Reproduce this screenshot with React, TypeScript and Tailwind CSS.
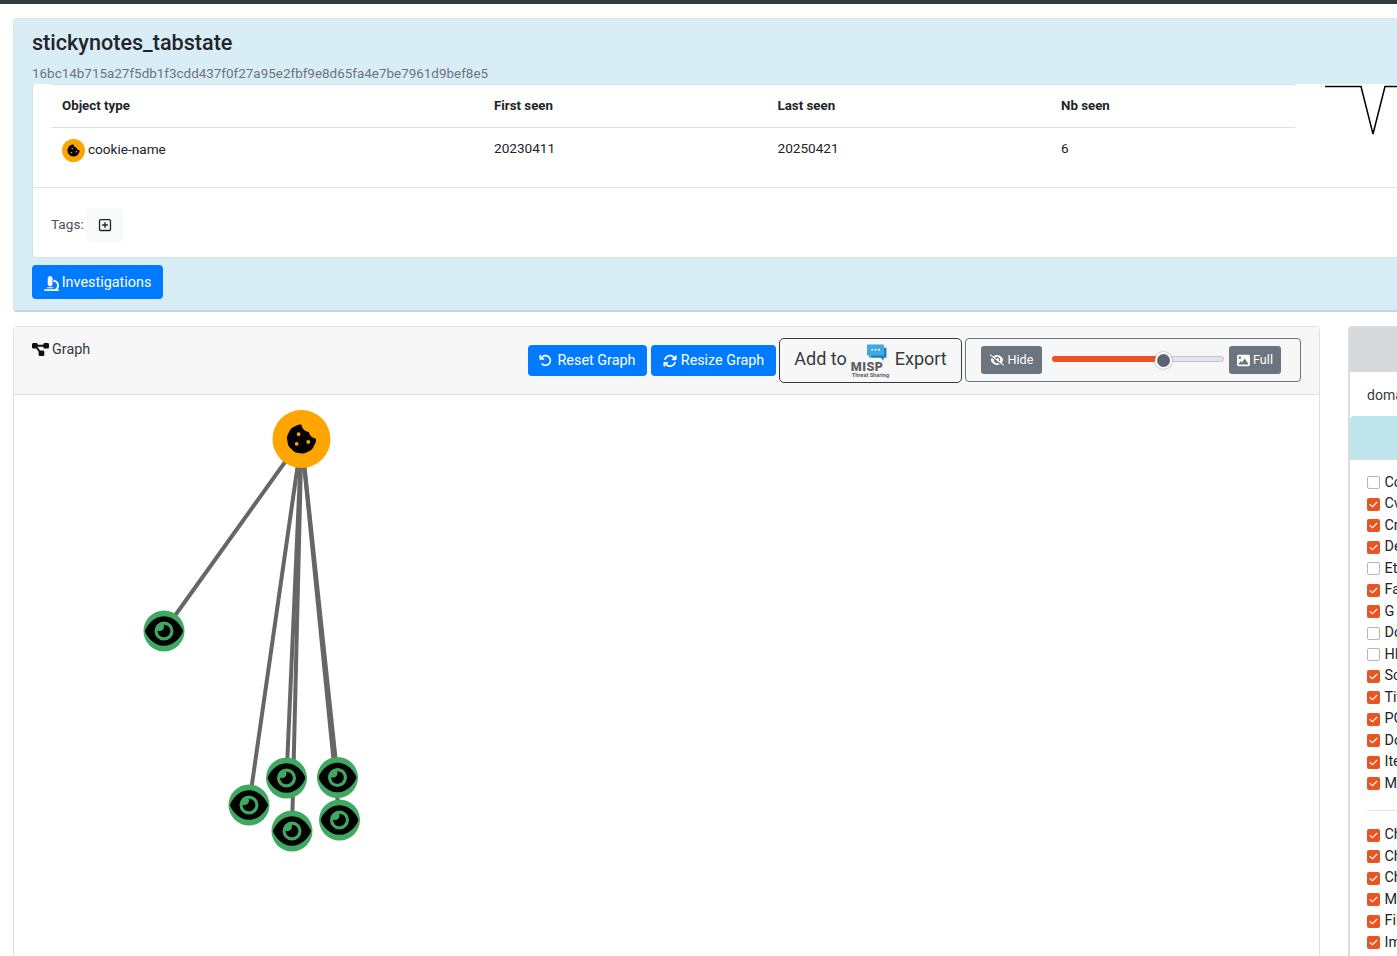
import {
  FaArrowRotateLeft,
  FaArrowsRotate,
  FaCheck,
  FaCookieBite,
  FaDiagramProject,
  FaEye,
  FaEyeSlash,
  FaImage,
  FaMicroscope,
  FaRegSquarePlus,
} from "react-icons/fa6"

const types: [string, boolean][] = [
  ["Cookie-Name", false],
  ["Cve", true],
  ["Cryptocurrency", true],
  ["Decoded", true],
  ["Etag", false],
  ["Favicon", true],
  ["G", true],
  ["Domain", false],
  ["HHHash", false],
  ["Screenshot", true],
  ["Title", true],
  ["PGP", true],
  ["Dom-Hash", true],
  ["Item", true],
  ["Message", true],
]

const chats: [string, boolean][] = [
  ["Chat", true],
  ["Chat-Subchannel", true],
  ["Chat-Thread", true],
  ["Mail", true],
  ["File-Name", true],
  ["Image", true],
]

const eyes = [
  { x: 164, y: 631 },
  { x: 286.5, y: 778 },
  { x: 337.5, y: 777.5 },
  { x: 249, y: 805 },
  { x: 339.5, y: 820 },
  { x: 292, y: 831 },
]

const ROOT = { x: 301.5, y: 439 }
// page offset of the graph body
const OX = 14
const OY = 395

const CheckRow = ({ label, checked }: { label: string; checked: boolean }) => (
  <div className="flex items-center h-[21.5px] gap-[4.5px] whitespace-nowrap text-[14.4px] text-[#212529]">
    {checked ? (
      <span className="w-[13px] h-[13px] rounded-[2px] bg-[#e95420] flex items-center justify-center shrink-0">
        <FaCheck className="text-white text-[9px]" />
      </span>
    ) : (
      <span className="w-[13px] h-[13px] rounded-[2px] border border-[#b4b4be] bg-white shrink-0" />
    )}
    {label}
  </div>
)

const MispLogo = () => (
  <div className="relative w-[40px] h-[34px] shrink-0 mt-[7px]">
    <svg viewBox="0 0 24 20" className="absolute left-[14px] top-[-1px] w-[23px] h-[19px]">
      <path d="M5 4h17.5v10.5h-3v3l-3-3H6z" fill="#1b7fbd" />
      <path d="M2 1.5a1 1 0 0 1 1-1h16a1 1 0 0 1 1 1v9.5a1 1 0 0 1-1 1h-12l-3 3v-3h-1a1 1 0 0 1-1-1z" fill="#3fa9e0" />
      <circle cx="7.5" cy="6" r="1" fill="#fff" />
      <circle cx="11" cy="6" r="1" fill="#fff" />
      <circle cx="14.5" cy="6" r="1" fill="#fff" />
    </svg>
    <span className="absolute left-0 top-[15px] text-[12.5px] leading-[14px] font-black tracking-[0.5px] text-[#5a6066]">
      MISP
    </span>
    <span className="absolute left-[1px] top-[27px] text-[5.6px] leading-[6px] font-bold whitespace-nowrap text-[#5a6066]">
      Threat Sharing
    </span>
  </div>
)

const Graph = () => (
  <svg width="1306" height="561" className="block">
    <g stroke="#666" fill="none" strokeWidth="4">
      <line x1={ROOT.x - OX} y1={ROOT.y - OY} x2={164 - OX} y2={631 - OY} />
      <line x1={ROOT.x - OX} y1={ROOT.y - OY} x2={249 - OX} y2={805 - OY} />
      <line x1={ROOT.x - OX} y1={ROOT.y - OY} x2={286.5 - OX} y2={778 - OY} />
      <line x1={ROOT.x - OX} y1={ROOT.y - OY} x2={292 - OX} y2={831 - OY} />
      <line x1={ROOT.x - OX} y1={ROOT.y - OY} x2={337.5 - OX} y2={777 - OY} />
      <line x1={ROOT.x - OX} y1={ROOT.y - OY} x2={339.5 - OX} y2={820 - OY} />
    </g>
    <circle cx={ROOT.x - OX} cy={ROOT.y - OY} r="29" fill="#ffa500" />
    <FaCookieBite x={ROOT.x - OX - 15.5} y={ROOT.y - OY - 15.5} size={31} color="#000" />
    {eyes.map((e) => (
      <g key={`${e.x}-${e.y}`}>
        <circle cx={e.x - OX} cy={e.y - OY} r="20.5" fill="#3fa962" />
        <FaEye x={e.x - OX - 19} y={e.y - OY - 19} size={38} color="#000" />
      </g>
    ))}
  </svg>
)

const App = () => {
  return (
    <div className="w-[1397px] h-[956px] overflow-hidden bg-white font-['Roboto',sans-serif] text-[#212529]">
      <div className="h-[4px] bg-[#343a40]" />

      <div className="ml-[13px] mt-[14px] w-[1500px] h-[294px] bg-[#d9edf7] rounded-[4px] border border-[#dfe3e6] border-b-2 border-b-[#c5d3da]">
        <div className="pl-[18px] h-[65px]">
          <h1 className="pt-[9px] text-[21.6px] leading-[30px] font-medium">stickynotes_tabstate</h1>
          <div className="mt-[7px] text-[13.44px] leading-[18px] text-[#6c757d]">
            16bc14b715a27f5db1f3cdd437f0f27a95e2fbf9e8d65fa4e7be7961d9bef8e5
          </div>
        </div>

        <div className="ml-[18px] bg-white rounded-[4px] h-[174px] border border-t-0 border-[#d3e0e6]">
          <div className="flex h-[104px] border-b border-[#dee2e6]">
            <div className="ml-[18px] w-[1244px] border-t border-[#dee2e6]">
              <div className="grid grid-cols-[432px_283.5px_283.5px_1fr] h-[43px] items-center text-[13.3px] font-bold border-b border-[#dee2e6] pl-[11px]">
                <div>Object type</div>
                <div>First seen</div>
                <div>Last seen</div>
                <div>Nb seen</div>
              </div>
              <div className="grid grid-cols-[432px_283.5px_283.5px_1fr] h-[44px] items-center text-[13.6px] pl-[11px]">
                <div className="flex items-center gap-[3px]">
                  <span className="w-[23px] h-[23px] rounded-full bg-[#ffa500] flex items-center justify-center">
                    <FaCookieBite className="text-black text-[13px]" />
                  </span>
                  <span className="-mt-[2px]">cookie-name</span>
                </div>
                <div className="-mt-[4px]">20230411</div>
                <div className="-mt-[4px]">20250421</div>
                <div className="-mt-[4px]">6</div>
              </div>
            </div>
            <svg width="80" height="60" className="ml-[30px] shrink-0">
              <path d="M0 2.5H36L48 50L60 2.5H80" fill="none" stroke="#000" strokeWidth="1.5" />
            </svg>
          </div>
          <div className="flex items-center ml-[18px] mt-[20px] text-[13.6px] leading-[34px] text-[#495057]">
            <span className="-mt-[2px]">Tags:</span>
            <span className="ml-[3px] w-[36px] h-[34px] rounded-[4px] bg-[#f8f9fa] flex items-center justify-center">
              <FaRegSquarePlus className="text-[#212529] text-[14px]" />
            </span>
          </div>
        </div>

        <button
          type="button"
          className="ml-[18px] mt-[7px] h-[34px] w-[131px] flex items-center justify-center gap-[3px] rounded-[4px] bg-[#007bff] text-white text-[14.4px] pt-[2px]"
        >
          <FaMicroscope className="text-[15px]" />
          Investigations
        </button>
      </div>

      <div className="flex items-start ml-[13px] mt-[14px] w-[1600px] gap-[28px]">
        <div className="w-[1307px] h-[700px] shrink-0 rounded-[4px] border border-[#e0e0e0] bg-white">
          <div className="h-[68px] bg-[#f7f7f7] border-b border-[#e0e0e0] flex justify-between pl-[18px] pr-[18px]">
            <div className="flex items-center gap-[3px] h-[45px] text-[14.4px] text-[#343a40]">
              <FaDiagramProject className="text-[#111] text-[17px]" />
              Graph
            </div>
            <div className="flex items-start pt-[11px]">
              <button
                type="button"
                className="mt-[7px] h-[31px] w-[119px] flex items-center justify-center gap-[5px] rounded-[4px] bg-[#007bff] text-white text-[14.4px]"
              >
                <FaArrowRotateLeft className="text-[13px]" />
                Reset Graph
              </button>
              <button
                type="button"
                className="ml-[4px] mt-[7px] h-[31px] w-[125px] flex items-center justify-center gap-[4px] rounded-[4px] bg-[#007bff] text-white text-[14.3px]"
              >
                <FaArrowsRotate className="text-[14px]" />
                Resize Graph
              </button>
              <button
                type="button"
                className="ml-[3px] h-[45px] w-[183px] flex items-center justify-center gap-[4px] rounded-[5px] border border-[#343a40] text-[#343a40] text-[18px] pb-[5px]"
              >
                Add to
                <MispLogo />
                Export
              </button>
              <div className="ml-[3px] h-[44px] w-[336px] flex items-center pl-[15px] rounded-[4px] border border-[#6c757d]">
                <button
                  type="button"
                  className="h-[28px] w-[61px] flex items-center justify-center gap-[4px] rounded-[3px] bg-[#6c757d] text-white text-[12.6px]"
                >
                  <FaEyeSlash className="text-[14px]" />
                  Hide
                </button>
                <div className="relative ml-[10px] mb-[3px] w-[172px] h-[6px] rounded-full bg-[#e4e4ec] border border-[#c6c6d0]">
                  <div className="w-[111px] h-[6px] -mt-px -ml-px rounded-full bg-[#e95420]" />
                  <div className="absolute left-[102px] top-[-5px] w-[17px] h-[17px] rounded-full bg-[#5f6270] border-2 border-white shadow-[0_0_2px_#888]" />
                </div>
                <button
                  type="button"
                  className="ml-[5px] h-[28px] w-[52px] flex items-center justify-center gap-[3px] rounded-[3px] bg-[#6c757d] text-white text-[12.6px]"
                >
                  <FaImage className="text-[13px]" />
                  Full
                </button>
              </div>
            </div>
          </div>
          <Graph />
        </div>

        <div className="w-[300px] h-[700px] shrink-0 rounded-[4px] border-2 border-[#dcdcdc] bg-white">
          <div className="h-[44px] bg-[#d6d8db]" />
          <div className="h-[44px] pl-[17px] flex items-center pt-[2px] text-[14px] text-[#343a40]">domain</div>
          <div className="h-[44px] rounded-t-[4px] bg-[#bee5eb] border-b border-[#e0e0e0]" />
          <div className="pl-[17px] pt-[12px]">
            {types.map(([label, checked], i) => (
              <CheckRow key={`${label}-${i}`} label={label} checked={checked} />
            ))}
            <div className="mt-[15px] mb-[14px] w-[200px] border-t border-[#e5e5e5]" />
            {chats.map(([label, checked]) => (
              <CheckRow key={label} label={label} checked={checked} />
            ))}
          </div>
        </div>
      </div>
    </div>
  )
}

export default App
